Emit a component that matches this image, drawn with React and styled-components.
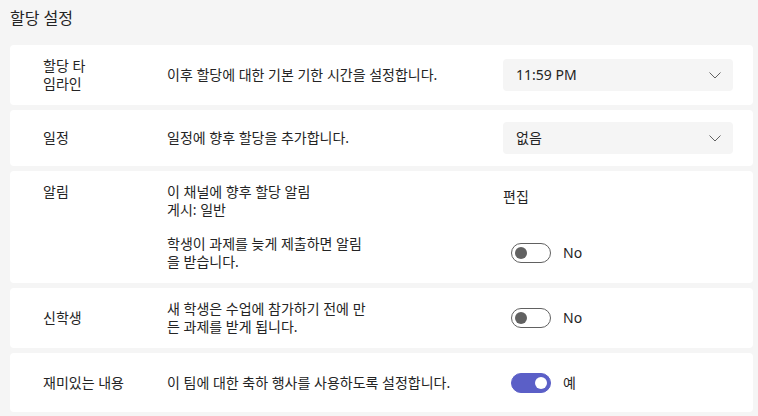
import React from "react";
import styled, { createGlobalStyle } from "styled-components";

const Global = createGlobalStyle`
  html, body { margin: 0; padding: 0; background: #f5f5f5; }
  body {
    font-family: "Noto Sans", "Noto Sans CJK KR", sans-serif;
    color: #242424;
  }
`;

const Page = styled.div`
  width: 758px;
  height: 416px;
  box-sizing: border-box;
  padding: 6px 5px 0 10px;
  background: #f5f5f5;
  overflow: hidden;
`;

const Title = styled.h2`
  margin: 0 0 15px;
  font-size: 16px;
  line-height: 24px;
  font-weight: 400;
`;

const List = styled.div`
  display: flex;
  flex-direction: column;
  gap: 5px;
`;

const Card = styled.section`
  background: #fff;
  border-radius: 4px;
  display: grid;
  grid-template-columns: 124px 336px 1fr;
  align-items: ${(p) => (p.$top ? "start" : "center")};
  padding: 12px 20px 12px 33px;
  min-height: ${(p) => p.$minH || 0}px;
  box-sizing: border-box;
  font-size: 14px;
  line-height: 18px;
`;

const Label = styled.div`
  white-space: nowrap;
`;

const Desc = styled.div`
  white-space: nowrap;
`;

const Stack = styled.div`
  grid-column: 2 / 4;
  display: flex;
  flex-direction: column;
  gap: 16px;
`;

const SubRow = styled.div`
  display: grid;
  grid-template-columns: 336px 1fr;
  align-items: ${(p) => (p.$top ? "start" : "center")};
`;

const Select = styled.button`
  all: unset;
  box-sizing: border-box;
  width: 230px;
  height: 32px;
  padding: 0 12px 0 13px;
  border-radius: 4px;
  background: #f5f5f5;
  display: flex;
  align-items: center;
  justify-content: space-between;
  font-family: "Noto Sans", "Noto Sans CJK KR", sans-serif;
  font-size: 14px;
  color: #242424;
`;

const EditLink = styled.span`
  display: block;
  padding-top: 5px;
`;

const ToggleWrap = styled.label`
  display: flex;
  align-items: center;
  gap: 12px;
  margin-left: 8px;
`;

const Track = styled.span`
  position: relative;
  box-sizing: border-box;
  width: 40px;
  height: 20px;
  border-radius: 10px;
  border: 1px solid ${(p) => (p.$on ? "#5b5fc7" : "#616161")};
  background: ${(p) => (p.$on ? "#5b5fc7" : "#fff")};
  flex: none;
`;

const Knob = styled.span`
  position: absolute;
  top: 3px;
  left: ${(p) => (p.$on ? "23px" : "3px")};
  width: 12px;
  height: 12px;
  border-radius: 50%;
  background: ${(p) => (p.$on ? "#fff" : "#616161")};
`;

const Chevron = () => (
  <svg width="12" height="7" viewBox="0 0 12 7" aria-hidden="true">
    <polyline points="0.5,0.5 6,6 11.5,0.5" fill="none" stroke="#616161" strokeWidth="1" />
  </svg>
);

const Toggle = ({ on, text }) => (
  <ToggleWrap>
    <Track $on={on}>
      <Knob $on={on} />
    </Track>
    <span>{text}</span>
  </ToggleWrap>
);

export default function App() {
  return (
    <Page>
      <Global />
      <Title>할당 설정</Title>
      <List>
        <Card>
          <Label>
            할당 타<br />임라인
          </Label>
          <Desc>이후 할당에 대한 기본 기한 시간을 설정합니다.</Desc>
          <Select>
            <span>11:59 PM</span>
            <Chevron />
          </Select>
        </Card>

        <Card>
          <Label>일정</Label>
          <Desc>일정에 향후 할당을 추가합니다.</Desc>
          <Select>
            <span>없음</span>
            <Chevron />
          </Select>
        </Card>

        <Card $top>
          <Label>알림</Label>
          <Stack>
            <SubRow $top>
              <Desc>
                이 채널에 향후 할당 알림
                <br />
                게시: 일반
              </Desc>
              <EditLink>편집</EditLink>
            </SubRow>
            <SubRow>
              <Desc>
                학생이 과제를 늦게 제출하면 알림
                <br />을 받습니다.
              </Desc>
              <Toggle on={false} text="No" />
            </SubRow>
          </Stack>
        </Card>

        <Card>
          <Label>신학생</Label>
          <Desc>
            새 학생은 수업에 참가하기 전에 만
            <br />든 과제를 받게 됩니다.
          </Desc>
          <Toggle on={false} text="No" />
        </Card>

        <Card $minH={59}>
          <Label>재미있는 내용</Label>
          <Desc>이 팀에 대한 축하 행사를 사용하도록 설정합니다.</Desc>
          <Toggle on text="예" />
        </Card>
      </List>
    </Page>
  );
}
